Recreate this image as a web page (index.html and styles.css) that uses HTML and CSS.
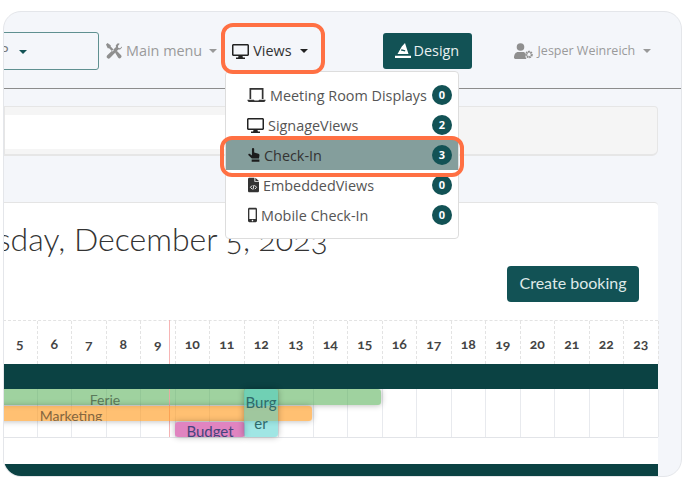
FILE: index.html
```html
<!DOCTYPE html>
<html lang="en">
<head>
    <meta charset="UTF-8">
    <title>Views</title>
    <link rel="stylesheet" href="styles.css">
</head>
<body>
    <div class="frame">
        <nav class="navbar">
            <div class="site-select"><span>P</span><i class="caret caret-dark"></i></div>
            <a class="nav-link muted main-menu">
                <svg class="icon" width="17" height="16" viewBox="0 0 17 16"><path fill="#8f8f8f" d="M1 1.500 2.500 0l3.200 2.200v1.400L9 6.900 7.400 8.500 4.100 5.200H2.700zM12.800.2l-2 2 .2 1.700-8.700 8.400a1.900 1.900 0 0 0 2.700 2.700l8.300-8.600 1.800.2 2-2.100-.2-1-1.800 1.800-1.800-.4-.4-1.800L14.700.8z"/><path fill="#8f8f8f" d="m10 9.500 1.700-1.700 4.200 4.200a1.900 1.900 0 0 1-2.700 2.700z"/></svg>
                <span>Main menu</span><i class="caret"></i>
            </a>
            <a class="nav-link views-link">
                <svg class="icon" width="17" height="16" viewBox="0 0 17 16"><use href="#desktop"/></svg>
                <span>Views</span><i class="caret caret-dark"></i>
            </a>
            <button class="design-btn">
                <svg class="icon" width="16" height="15" viewBox="0 0 16 15"><path fill="#fff" d="M10 0 13.500 11h-11L6.800 3.500zM0 12.800h16V15H0z"/><path fill="#125255" d="M5.800 7.500 10 8.600l.3-1.300-3.800-1z"/></svg>
                Design
            </button>
            <a class="nav-link muted user-menu">
                <svg class="icon" width="19" height="16" viewBox="0 0 19 16"><circle cx="6.500" cy="4" r="3.800" fill="#8f8f8f"/><path fill="#8f8f8f" d="M0 15c0-4 2-6 4-6h5c1 0 2 .5 2.500 1.500-.5 2 0 4 1 5.500H1z"/><circle cx="15" cy="11.500" r="2.700" fill="none" stroke="#8f8f8f" stroke-width="2.200" stroke-dasharray="1.700 .6"/></svg>
                <span>Jesper Weinreich</span><i class="caret"></i>
            </a>
        </nav>

        <div class="main">
            <div class="filter-card"><div class="filter-panel"></div></div>
            <section class="calendar-card">
                <h1>Tuesday, December 5, 2023</h1>
                <div class="calendar-actions"><button class="create-btn">Create booking</button></div>
                <div class="hours">
                    <div>5</div><div>6</div><div>7</div><div>8</div><div>9</div><div>10</div><div>11</div><div>12</div><div>13</div><div>14</div>
                    <div>15</div><div>16</div><div>17</div><div>18</div><div>19</div><div>20</div><div>21</div><div>22</div><div>23</div>
                </div>
                <div class="band"></div>
                <div class="timeline">
                    <div></div><div></div><div></div><div></div><div></div><div></div><div></div><div></div><div></div><div></div>
                    <div></div><div></div><div></div><div></div><div></div><div></div><div></div><div></div><div></div>
                    <div class="booking ferie">Ferie</div>
                    <div class="booking marketing">Marketing</div>
                    <div class="booking budget">Budget</div>
                    <div class="booking burger">Burg er</div>
                </div>
                <div class="row-gap"></div>
                <div class="band band-bottom"></div>
                <div class="now-line"></div>
            </section>
        </div>

        <div class="views-menu">
            <a class="menu-item">
                <svg class="icon icon-wide" width="19" height="16" viewBox="0 0 18 16"><path fill="#333" d="M2 1h14v11h-1.700V2.700H3.700V12H2zM0 12.700h6.500l.5.800h4l.5-.8H18v1l-1.200 1.300H1.200L0 13.700z"/></svg>
                <span>Meeting Room Displays</span><b class="badge">0</b>
            </a>
            <a class="menu-item">
                <svg class="icon icon-wide" width="17" height="16" viewBox="0 0 17 16"><use href="#desktop"/></svg>
                <span>SignageViews</span><b class="badge">2</b>
            </a>
            <a class="menu-item active">
                <svg class="icon" width="12" height="16" viewBox="0 0 14 16"><path fill="#1c1c1c" d="M4.600 1a1.300 1.300 0 0 1 2.600 0v4.200l5 1.300c.8.200 1.300 1 1.200 1.800l-.6 3.700H4.500L.6 8.300c-.8-1 .5-2.300 1.600-1.500l2.400 1.900zM4.300 13.200h9V16h-9z"/></svg>
                <span>Check-In</span><b class="badge">3</b>
            </a>
            <a class="menu-item">
                <svg class="icon" width="11" height="16" viewBox="0 0 12 16"><path fill="#333" d="M0 1.500C0 .7.700 0 1.500 0H7v4.500h5v10c0 .8-.7 1.500-1.500 1.500h-9C.7 16 0 15.300 0 14.500zM8 0l4 3.500H8z"/><path fill="none" stroke="#fff" d="M4.500 8.500 2.700 10.500l1.800 2M7.500 8.500l1.800 2-1.800 2M6.600 8 5.400 13"/></svg>
                <span>EmbeddedViews</span><b class="badge">0</b>
            </a>
            <a class="menu-item">
                <svg class="icon" width="9" height="16" viewBox="0 0 10 16"><path fill="#333" d="M1.500 0h7C9.300 0 10 .7 10 1.500v13c0 .8-.7 1.500-1.500 1.500h-7C.7 16 0 15.300 0 14.500v-13C0 .7.700 0 1.500 0zm0 2v10.500h7V2zM5 13.300a.9.900 0 1 0 0 1.800.9.900 0 0 0 0-1.800z"/></svg>
                <span>Mobile Check-In</span><b class="badge">0</b>
            </a>
        </div>

        <div class="callout callout-views"></div>
        <div class="callout callout-checkin"></div>
    </div>

    <svg class="svg-defs" width="0" height="0">
        <symbol id="desktop" viewBox="0 0 17 16"><path fill="#222" d="M1.500 1h14c.8 0 1.500.7 1.500 1.500v9c0 .8-.7 1.500-1.500 1.500H10.500l.4 1.500H13V16H4v-1.500h2.100l.4-1.500h-5C.7 13 0 12.300 0 11.500v-9C0 1.700.7 1 1.500 1zm0 1.500v9h14v-9z"/></symbol>
    </svg>
</body>
</html>
```

FILE: styles.css
```css
* {
    box-sizing: border-box;
}
body {
    margin: 0;
    background-color: #fff;
    font-family: "Open Sans", sans-serif;
    font-size: 14.4px;
    color: #333;
}
.frame {
    position: relative;
    width: 679px;
    height: 466px;
    margin: 11px 0 0 3px;
    border: 1px solid #e4e6ea;
    border-radius: 18px;
    background-color: #f4f6fa;
    overflow: hidden;
}
.navbar {
    display: flex;
    align-items: center;
    height: 77px;
    padding-top: 1px;
    border-bottom: 1px solid #8c8c8c;
}
.icon {
    flex: none;
}
.caret {
    display: inline-block;
    width: 0;
    height: 0;
    border-top: 4px solid #999;
    border-left: 4px solid transparent;
    border-right: 4px solid transparent;
}
.caret-dark {
    border-top-color: #222;
}
.site-select {
    display: flex;
    align-items: center;
    gap: 10px;
    flex: none;
    width: 125px;
    height: 38px;
    margin-left: -30px;
    padding-left: 25px;
    border: 1px solid #5f9090;
    border-radius: 3px;
    color: #777;
}
.site-select .caret {
    margin-top: 3px;
    border-top-color: #125255;
}
.nav-link {
    display: flex;
    align-items: center;
    flex: none;
}
.muted {
    color: #9a9a9a;
}
.main-menu {
    margin-left: 6px;
}
.main-menu span {
    margin: 0 7px 0 4px;
}
.views-link {
    margin-left: 15px;
    color: #333;
}
.views-link span {
    margin: 0 8px 0 4px;
}
.design-btn {
    display: flex;
    align-items: center;
    gap: 3px;
    flex: none;
    width: 89px;
    height: 36px;
    margin-left: 75px;
    padding: 0 0 0 12px;
    border: none;
    border-radius: 3px;
    background-color: #125255;
    color: #e8f0f0;
    font-family: inherit;
    font-size: 14.4px;
}
.user-menu {
    margin-left: 42px;
    font-size: 12.5px;
}
.user-menu span {
    margin: 0 8px 0 5px;
}
.main {
    height: 387px;
}
.filter-card {
    width: 654px;
    height: 50px;
    margin-top: 17px;
    padding-top: 8px;
    border: 1px solid #e6e6e6;
    border-bottom-width: 2px;
    border-radius: 0 4px 6px 0;
    background-color: #f5f5f5;
}
.filter-panel {
    width: 300px;
    height: 34px;
    background-color: #fff;
}
.calendar-card {
    position: relative;
    width: 654px;
    height: 274px;
    margin-top: 46px;
    border-top: 1px solid #e4e4e4;
    border-radius: 0 4px 0 0;
    background-color: #fff;
}
h1 {
    height: 63px;
    margin: 0;
    padding-top: 17px;
    font-family: "Lato", sans-serif;
    font-size: 32px;
    font-weight: 300;
    font-variant-numeric: oldstyle-nums;
    line-height: 38px;
    color: #333;
    white-space: nowrap;
    text-indent: -56px;
}
.calendar-actions {
    display: flex;
    justify-content: flex-end;
    height: 54px;
    padding-right: 19px;
}
.create-btn {
    width: 132px;
    height: 36px;
    padding-bottom: 5px;
    border: none;
    border-radius: 4px;
    background-color: #125255;
    color: #dfe9e8;
    font-family: "Lato", sans-serif;
    font-size: 16px;
}
.hours,
.timeline {
    display: grid;
    grid-template-columns: repeat(19, 34.5px);
    margin-left: -1px;
}
.hours {
    height: 44px;
    border-top: 1px dashed #e3e3e3;
}
.hours div {
    padding-top: 14px;
    border-right: 1px dashed #e3e3e3;
    text-align: center;
    font-family: "Lato", sans-serif;
    font-size: 14px;
    font-weight: 700;
    font-variant-numeric: oldstyle-nums;
    color: #444;
}
.band {
    position: relative;
    height: 25px;
    background-color: #0b4243;
    z-index: 1;
}
.timeline {
    position: relative;
    height: 49px;
    border-bottom: 1px solid #e2e4e8;
}
.timeline > div {
    border-right: 1px solid #e8eaee;
}
.timeline .booking {
    position: absolute;
    padding-top: 1px;
    border: none;
    border-radius: 3px;
    overflow: hidden;
    font-family: "Lato", sans-serif;
    font-size: 14px;
    line-height: 20px;
    text-align: center;
    color: #555;
    box-shadow: 0 0 6px rgba(0,0,0,0.3);
}
.timeline .ferie {
    top: 0;
    left: -174px;
    width: 552px;
    height: 16px;
    background-color: rgba(64,165,64,0.5);
    color: #5b7a5b;
}
.timeline .marketing {
    top: 17px;
    left: -173px;
    width: 482px;
    height: 15px;
    padding-top: 0;
    background-color: rgba(255,150,20,0.6);
    color: #84663f;
    z-index: 1;
}
.timeline .budget {
    top: 33px;
    left: 172px;
    width: 70px;
    height: 15px;
    padding-top: 0;
    line-height: 18px;
    background-color: #e084c0;
    color: #45457c;
    font-size: 15px;
    z-index: 1;
}
.timeline .burger {
    top: 0;
    left: 241px;
    width: 34px;
    height: 48px;
    padding: 3px 0 0;
    font-size: 15px;
    line-height: 21px;
    background-color: rgba(65,205,201,0.5);
    color: #2f6a6a;
    z-index: 2;
    word-break: break-all;
}
.row-gap {
    height: 26px;
    background-color: #fff;
}
.band-bottom {
    height: 12px;
}
.now-line {
    position: absolute;
    top: 117px;
    left: 165px;
    width: 1px;
    height: 117px;
    background-color: #f5a3a3;
    opacity: 0.8;
}
.views-menu {
    position: absolute;
    top: 59px;
    left: 221px;
    width: 234px;
    height: 168px;
    padding-top: 8px;
    border: 1px solid #ddd;
    border-radius: 4px;
    background-color: #fff;
}
.menu-item {
    display: flex;
    align-items: center;
    gap: 4px;
    height: 30px;
    padding: 0 6px 0 22px;
    color: #555;
}
.menu-item span {
    flex: 1;
    white-space: nowrap;
}
.icon-wide {
    margin-left: -1px;
}
.menu-item.active {
    background-color: #849e9c;
    color: #333;
}
.badge {
    display: block;
    flex: none;
    width: 20px;
    height: 20px;
    border-radius: 50%;
    background-color: #125255;
    color: #fff;
    font-size: 11px;
    line-height: 20px;
    text-align: center;
}
.callout {
    position: absolute;
    border: 4px solid #ff7043;
    border-radius: 12px;
}
.callout-views {
    top: 11px;
    left: 217px;
    width: 104px;
    height: 51px;
}
.callout-checkin {
    top: 124px;
    left: 216px;
    width: 244px;
    height: 41px;
}
.svg-defs {
    position: absolute;
}
```
